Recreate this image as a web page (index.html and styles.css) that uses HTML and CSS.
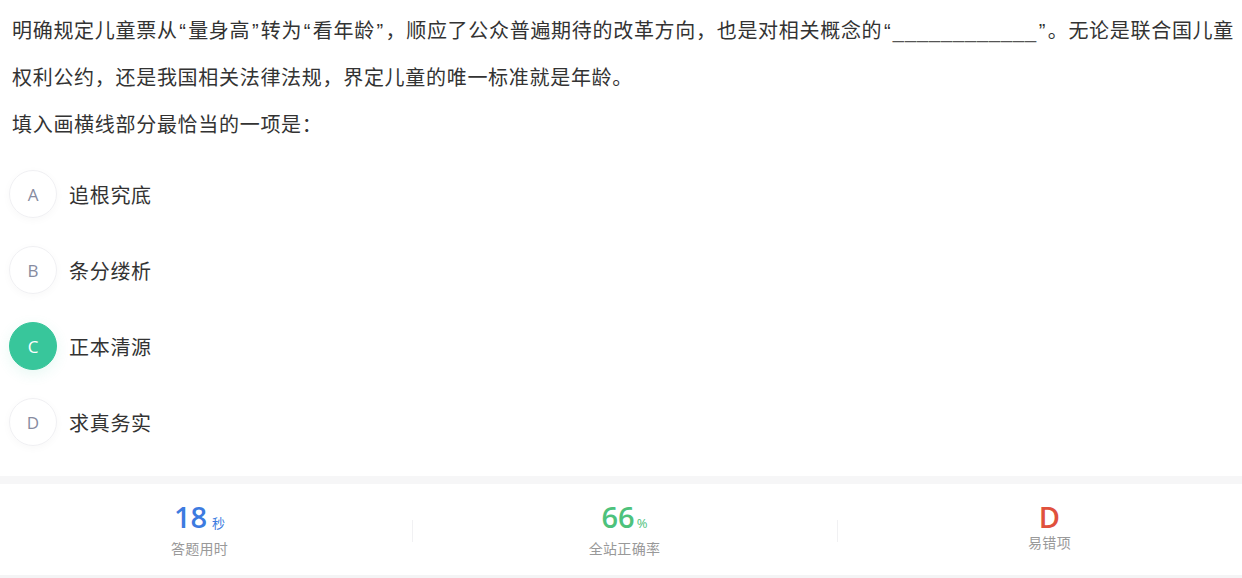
FILE: index.html
```html
<!DOCTYPE html>
<html lang="zh">
<head>
<meta charset="utf-8">
<title>题目</title>
<link rel="stylesheet" href="styles.css">
</head>
<body>
<div class="page">
  <section class="question">
    <p class="stem">明确规定儿童票从<span class="q">“</span>量身高<span class="q">”</span>转为<span class="q">“</span>看年龄<span class="q">”</span>，顺应了公众普遍期待的改革方向，也是对相关概念的<span class="q">“</span><span class="blank">____________</span><span class="q">”</span>。无论是联合国儿童权利公约，还是我国相关法律法规，界定儿童的唯一标准就是年龄。</p>
    <p class="prompt">填入画横线部分最恰当的一项是：</p>
  </section>
  <ul class="options">
    <li class="option"><span class="mark">A</span><span class="label">追根究底</span></li>
    <li class="option"><span class="mark">B</span><span class="label">条分缕析</span></li>
    <li class="option selected"><span class="mark">C</span><span class="label">正本清源</span></li>
    <li class="option"><span class="mark">D</span><span class="label">求真务实</span></li>
  </ul>
  <div class="band"></div>
  <div class="stats">
    <div class="stat">
      <div class="value blue">18<span class="unit unit-cn">秒</span></div>
      <div class="caption">答题用时</div>
    </div>
    <div class="stat divided">
      <div class="value green">66<span class="unit">%</span></div>
      <div class="caption">全站正确率</div>
    </div>
    <div class="stat divided">
      <div class="value red">D</div>
      <div class="caption">易错项</div>
    </div>
  </div>
  <div class="bottom-band"></div>
</div>
</body>
</html>
```
FILE: styles.css
```css
* { box-sizing: border-box; }
html, body { margin: 0; padding: 0; background: #fff; }
body {
  font-family: "Liberation Sans", "Noto Sans CJK SC", sans-serif;
  color: #333;
  overflow: hidden;
}
.page { width: 1242px; height: 578px; display: flex; flex-direction: column; }
.question { padding: 8px 4px 0 12px; }
.stem, .prompt {
  margin: 0;
  font-size: 20px;
  line-height: 47px;
  letter-spacing: 0.7px;
}
.q { padding: 0 1.6px; }
.blank { color: #555; letter-spacing: 0.9px; }
.options {
  list-style: none;
  margin: 21px 0 0 0;
  padding: 0 0 0 9px;
  display: flex;
  flex-direction: column;
  gap: 28px;
}
.option { display: flex; align-items: center; gap: 12px; height: 48px; }
.mark {
  width: 48px; height: 48px;
  border-radius: 50%;
  border: 1px solid #f0f0f3;
  box-shadow: 0 2px 8px rgba(0,0,0,0.03);
  display: flex; align-items: center; justify-content: center;
  font-family: "Open Sans", "Liberation Sans", sans-serif;
  font-size: 17px;
  color: #878b9f;
}
.selected .mark {
  background: #38c69b;
  border-color: #38c69b;
  color: #fff;
  box-shadow: 0 4px 14px rgba(56,198,155,0.12);
}
.label { font-size: 20px; letter-spacing: 0.7px; color: #333; }
.band { margin-top: 30px; height: 8px; background: #f6f6f7; }
.stats {
  display: flex;
  margin-left: -13px;
  height: 91px;
  align-items: flex-start;
}
.stat {
  width: 425px;
  height: 100%;
  flex: none;
  display: flex; flex-direction: column; align-items: center;
  position: relative;
  padding-top: 16px;
}
.divided::before {
  content: "";
  position: absolute;
  left: 0; top: 36px;
  width: 1px; height: 22px;
  background: #f1f1f3;
}
.value {
  font-family: "Open Sans", "Liberation Sans", sans-serif;
  font-weight: 600;
  font-size: 29px;
  line-height: 34px;
}
.unit { font-size: 13px; font-weight: 400; margin-left: 2px; }
.unit-cn { font-family: "Noto Sans CJK SC", sans-serif; margin-left: 5px; }
.blue { color: #3d7be0; }
.green { color: #4dc27c; }
.red { color: #e0513d; }
.caption { margin-top: -1px; font-size: 14px; line-height: 20px; color: #999; letter-spacing: 0.3px; }
.bottom-band { flex: 1; background: #f4f4f5; }
```
